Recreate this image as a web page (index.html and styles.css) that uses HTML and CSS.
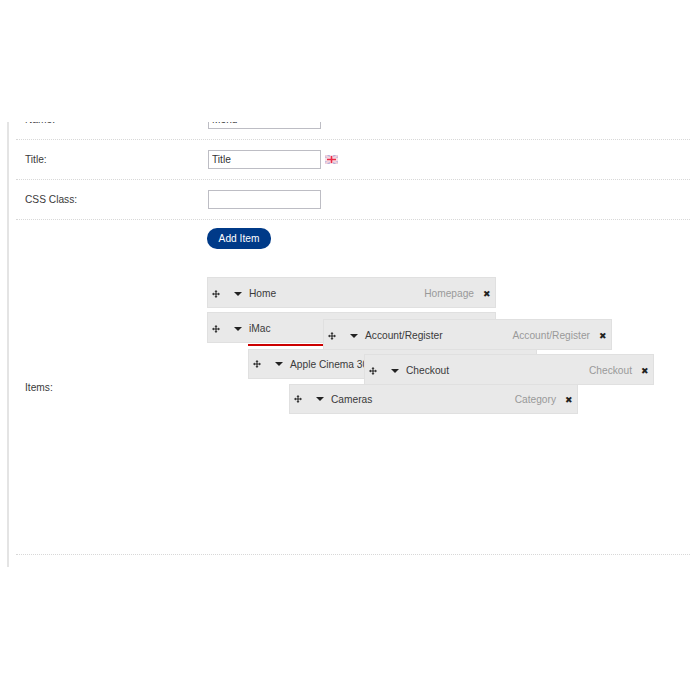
FILE: index.html
```html
<!DOCTYPE html>
<html>
<head>
    <meta charset="UTF-8">
    <title>Menu</title>
    <link rel="stylesheet" href="styles.css">
</head>
<body>
    <div class="panel">
        <div class="form">
            <!-- first row is cut off by the top of the panel -->
            <div class="row row-name">
                <div class="label">Name:</div>
                <div class="value"><input type="text" class="field" value="Menu"></div>
            </div>
            <div class="row">
                <div class="label">Title:</div>
                <div class="value">
                    <input type="text" class="field" value="Title">
                    <svg class="flag" width="13" height="9" viewBox="0 0 13 9">
                        <rect width="13" height="9" fill="#b4b0dc"/>
                        <path d="M0 0L13 9M13 0L0 9" stroke="#f2d0da" stroke-width="2"/>
                        <path d="M6.5 0V9M0 4.5H13" stroke="#f8dfe4" stroke-width="3.4"/>
                        <path d="M6.5 1V8M2 4.5H11" stroke="#ea2a48" stroke-width="1.6"/>
                    </svg>
                </div>
            </div>
            <div class="row">
                <div class="label">CSS Class:</div>
                <div class="value"><input type="text" class="field"></div>
            </div>
            <div class="row row-items">
                <div class="label">Items:</div>
                <div class="value value-items">
                    <button class="add-btn">Add Item</button>
                    <div class="items">
                        <div class="item item-low">
                            <svg class="move" viewBox="0 0 9 9"><use href="#move-icon"/></svg>
                            <span class="arrow"></span>
                            <span class="item-name">Home</span>
                            <span class="item-type">Homepage</span>
                            <span class="remove">&#10006;</span>
                        </div>
                        <div class="item item-low item-imac">
                            <svg class="move" viewBox="0 0 9 9"><use href="#move-icon"/></svg>
                            <span class="arrow"></span>
                            <span class="item-name">iMac</span>
                        </div>
                        <div class="drop-line"></div>
                        <div class="item depth-1 item-apple">
                            <svg class="move" viewBox="0 0 9 9"><use href="#move-icon"/></svg>
                            <span class="arrow"></span>
                            <span class="item-name">Apple Cinema 30"</span>
                        </div>
                        <div class="item depth-2 item-cameras">
                            <svg class="move" viewBox="0 0 9 9"><use href="#move-icon"/></svg>
                            <span class="arrow"></span>
                            <span class="item-name">Cameras</span>
                            <span class="item-type">Category</span>
                            <span class="remove">&#10006;</span>
                        </div>

                        <!-- items being dragged, they float over the list -->
                        <div class="item item-low dragged drag-account">
                            <svg class="move" viewBox="0 0 9 9"><use href="#move-icon"/></svg>
                            <span class="arrow"></span>
                            <span class="item-name">Account/Register</span>
                            <span class="item-type">Account/Register</span>
                            <span class="remove">&#10006;</span>
                        </div>
                        <div class="item item-low dragged drag-checkout">
                            <svg class="move" viewBox="0 0 9 9"><use href="#move-icon"/></svg>
                            <span class="arrow"></span>
                            <span class="item-name">Checkout</span>
                            <span class="item-type">Checkout</span>
                            <span class="remove">&#10006;</span>
                        </div>
                    </div>
                </div>
            </div>
        </div>
    </div>

    <svg width="0" height="0" class="defs">
        <symbol id="move-icon" viewBox="0 0 9 9">
            <path d="M4.5 0L6.2 2H5.1V3.9H7V2.8L9 4.5L7 6.2V5.1H5.1V7H6.2L4.5 9L2.8 7H3.9V5.1H2V6.2L0 4.5L2 2.8V3.9H3.9V2H2.8Z" fill="#222"/>
        </symbol>
    </svg>
</body>
</html>
```

FILE: styles.css
```css
* {
    box-sizing: border-box;
}

body {
    margin: 0;
    padding-top: 122px;
    background-color: #fff;
    font-family: "Liberation Sans", Arial, sans-serif;
    font-size: 10.2px;
    color: #3a3a3a;
}

.defs {
    display: block;
}

/* Panel */
.panel {
    height: 445px;
    margin-left: 7px;
    border-left: 2px solid #e4e4e4;
    padding-left: 7px;
    overflow: hidden;
}

.form {
    margin-top: -22px;
}

.row {
    display: flex;
    align-items: center;
    height: 40px;
    border-bottom: 1px dotted #d8d8d8;
}

.row-items {
    height: 335px;
}

.label {
    width: 191px;
    padding-left: 9px;
    flex-shrink: 0;
}

.value {
    display: flex;
    align-items: center;
}

.value-items {
    display: block;
    align-self: flex-start;
    flex: 1;
}

.field {
    width: 113px;
    height: 19px;
    margin-left: 1px;
    padding: 0 3px;
    border: 1px solid #bdbdc4;
    background-color: #fff;
    font-family: "Liberation Sans", Arial, sans-serif;
    font-size: 10.2px;
    color: #333;
}

.flag {
    margin-left: 4px;
}

.add-btn {
    display: block;
    width: 64px;
    height: 21px;
    margin-top: 8px;
    padding: 0 0 1px;
    border: none;
    border-radius: 10px;
    background-color: #003a88;
    font-family: "Liberation Sans", Arial, sans-serif;
    font-size: 10.2px;
    color: #fff;
}

/* Menu items */
.items {
    position: relative;
    margin-top: 28px;
}

.item {
    display: flex;
    align-items: center;
    width: 289px;
    height: 31px;
    margin-bottom: 4px;
    padding-left: 4px;
    padding-right: 4px;
    border: 1px solid #e0e0e0;
    background-color: #e9e9e9;
}

.item-low {
    padding-top: 2px;
}

.item-imac {
    margin-bottom: 1px;
}

.item-apple {
    height: 30px;
    margin-bottom: 5px;
}

.depth-1 {
    margin-left: 41px;
}

.depth-2 {
    margin-left: 82px;
    height: 30px;
}

.drop-line {
    width: 75px;
    height: 2px;
    margin-left: 41px;
    margin-bottom: 3px;
    background-color: #cc0000;
}

.move {
    width: 8px;
    height: 8px;
    flex-shrink: 0;
}

.arrow {
    width: 0;
    height: 0;
    margin-left: 14px;
    border-left: 4px solid transparent;
    border-right: 4px solid transparent;
    border-top: 4px solid #222;
    flex-shrink: 0;
}

.item-name {
    margin-left: 7px;
    white-space: nowrap;
}

.item-type {
    margin-left: auto;
    color: #999;
    white-space: nowrap;
}

.remove {
    margin-left: 9px;
    padding-top: 2px;
    font-size: 9px;
    line-height: 1;
    color: #222;
}

.dragged {
    position: absolute;
    margin: 0;
}

.drag-account {
    left: 116px;
    top: 42px;
}

.drag-checkout {
    left: 157px;
    top: 77px;
    width: 290px;
}
```
